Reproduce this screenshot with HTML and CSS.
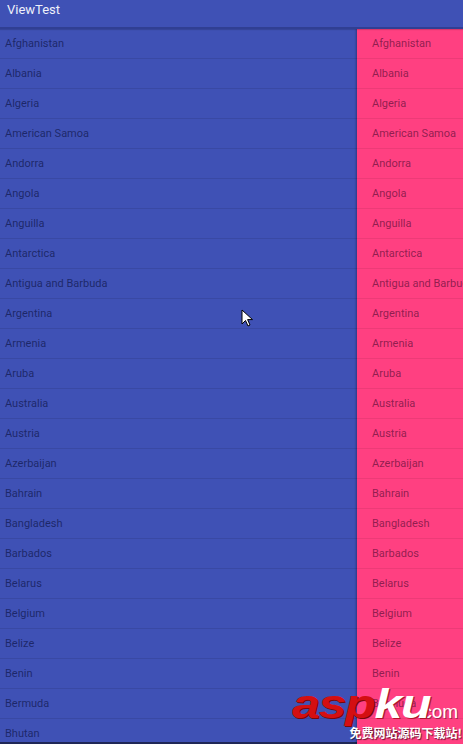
FILE: index.html
```html
<!DOCTYPE html>
<html>
<head>
<meta charset="utf-8">
<link rel="stylesheet" href="styles.css">
</head>
<body>
<div class="screen">
  <header class="toolbar"><span class="title">ViewTest</span></header>
  <div class="content">
    <ul class="list main-list">
      <li>Afghanistan</li><li>Albania</li><li>Algeria</li><li>American Samoa</li><li>Andorra</li><li>Angola</li><li>Anguilla</li><li>Antarctica</li><li>Antigua and Barbuda</li><li>Argentina</li><li>Armenia</li><li>Aruba</li><li>Australia</li><li>Austria</li><li>Azerbaijan</li><li>Bahrain</li><li>Bangladesh</li><li>Barbados</li><li>Belarus</li><li>Belgium</li><li>Belize</li><li>Benin</li><li>Bermuda</li><li>Bhutan</li><li>Bolivia</li>
    </ul>
    <ul class="list drawer">
      <li>Afghanistan</li><li>Albania</li><li>Algeria</li><li>American Samoa</li><li>Andorra</li><li>Angola</li><li>Anguilla</li><li>Antarctica</li><li>Antigua and Barbuda</li><li>Argentina</li><li>Armenia</li><li>Aruba</li><li>Australia</li><li>Austria</li><li>Azerbaijan</li><li>Bahrain</li><li>Bangladesh</li><li>Barbados</li><li>Belarus</li><li>Belgium</li><li>Belize</li><li>Benin</li><li>Bermuda</li><li>Bhutan</li><li>Bolivia</li>
    </ul>
  </div>
  <svg class="cursor" width="13" height="19" viewBox="0 0 13 19">
    <path d="M1 1 L1 15 L4.5 11.5 L7 17 L9 16 L6.6 10.6 L11.5 10.6 Z" fill="#fff" stroke="#000" stroke-width="1" stroke-linejoin="round"/>
  </svg>
  <div class="watermark">
    <div class="wm-top"><span class="wm-logo"><span class="wm-red">asp</span><span class="wm-white">ku</span></span><span class="wm-com">.com</span></div>
    <div class="wm-sub">免费网站源码下载站!</div>
  </div>
</div>
</body>
</html>
```
FILE: styles.css
```css
html, body {
  margin: 0;
  padding: 0;
  background: #3f51b5;
}
.screen {
  position: relative;
  width: 463px;
  height: 744px;
  overflow: hidden;
  display: flex;
  flex-direction: column;
  font-family: Roboto, "Noto Sans", sans-serif;
  background: #3f51b5;
}
.toolbar {
  flex: 0 0 27px;
  height: 27px;
  background: #3f51b5;
  border-bottom: 2px solid #303f93;
  box-shadow: 0 1px 1px rgba(0, 0, 0, 0.15);
  padding-left: 7px;
  color: #eef0fa;
  font-size: 13px;
  line-height: 20px;
  position: relative;
  z-index: 2;
}
.content {
  flex: 1;
  display: flex;
  min-height: 0;
}
.list {
  list-style: none;
  margin: 0;
  padding: 0;
  overflow: hidden;
  box-sizing: border-box;
}
.list li {
  height: 30px;
  box-sizing: border-box;
  border-bottom: 1px solid rgba(0, 0, 0, 0.09);
  font-size: 11px;
  padding-top: 1px;
  line-height: 28px;
  white-space: nowrap;
  color: rgba(0, 0, 0, 0.5);
}
.main-list {
  flex: 0 0 357px;
  border-bottom: 2px solid #1f2756;
}
.main-list li {
  padding-left: 5px;
  color: rgba(10, 15, 60, 0.64);
}
.drawer {
  flex: 0 0 150px;
  background: #ff4081;
  box-shadow: -1px 0 2px rgba(0, 0, 0, 0.3);
  position: relative;
  z-index: 1;
}
.drawer li {
  padding-left: 15px;
  color: rgba(80, 10, 50, 0.64);
  border-bottom-color: rgba(0, 0, 0, 0.07);
}
.cursor {
  position: absolute;
  left: 241px;
  top: 309px;
  z-index: 5;
}
.watermark {
  position: absolute;
  left: 292px;
  top: 684px;
  z-index: 5;
  width: 170px;
}
.wm-top {
  display: flex;
  align-items: baseline;
  height: 41px;
}
.wm-logo {
  display: inline-block;
  font-family: "Liberation Sans", Arial, sans-serif;
  font-weight: bold;
  font-style: italic;
  font-size: 40px;
  line-height: 40px;
  letter-spacing: -1px;
  transform: scaleX(1.25);
  transform-origin: left bottom;
  width: 108px;
}
.wm-red {
  color: #d40f12;
  text-shadow: 1px 1px 0 #7a0608;
}
.wm-white {
  color: #ffffff;
  text-shadow: 1px 1px 0 #b0162a;
}
.wm-com {
  font-family: "Liberation Sans", Arial, sans-serif;
  font-size: 19px;
  color: #fff;
  margin-left: 17px;
  text-shadow: 1px 1px 0 rgba(0,0,0,0.35);
}
.wm-sub {
  font-family: "Noto Sans CJK SC", sans-serif;
  font-size: 12px;
  line-height: 15px;
  font-weight: bold;
  color: #fff;
  text-align: right;
  padding-right: 0;
  text-shadow: 1px 1px 1px rgba(0,0,0,0.6);
}
```
